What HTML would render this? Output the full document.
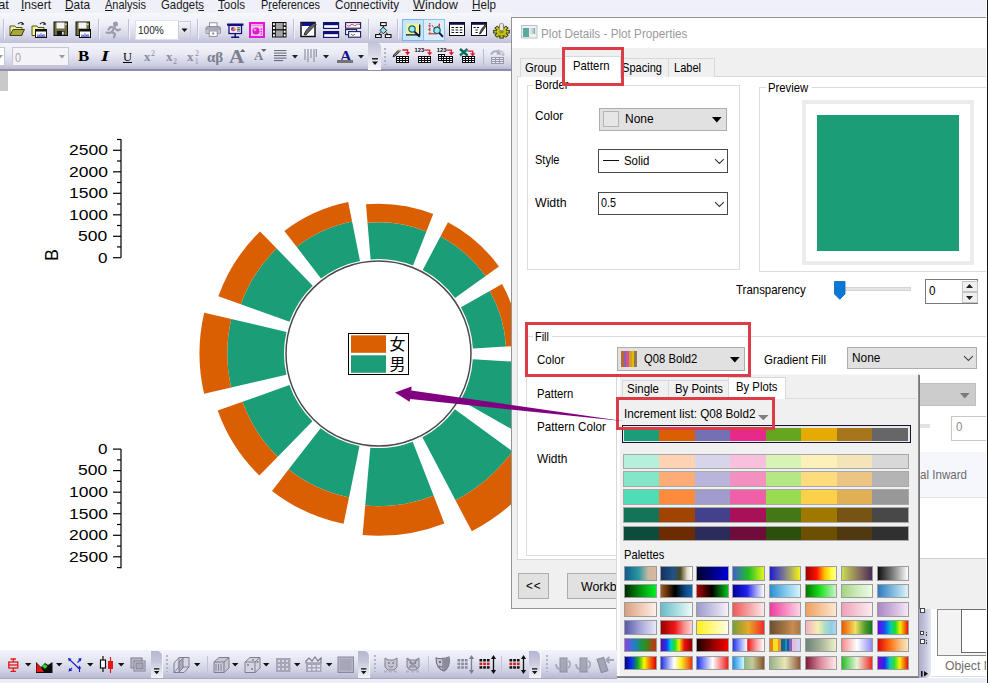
<!DOCTYPE html>
<html><head><meta charset="utf-8"><title>Plot Details - Plot Properties</title>
<style>
html,body{margin:0;padding:0;}
body{width:988px;height:683px;position:relative;overflow:hidden;background:#fff;font-family:"Liberation Sans",sans-serif;}
.a{position:absolute;box-sizing:border-box;}
.t{position:absolute;white-space:nowrap;line-height:1;display:inline-block;transform-origin:0 0;}
u{text-decoration:underline;text-underline-offset:1px;}
</style></head><body>
<div class="a" style="left:0px;top:0px;width:988px;height:14px;background:#eff0f8;"></div>
<div class="a" style="left:0px;top:13px;width:520px;height:30px;background:linear-gradient(#f7f8fc 0%,#eeeff7 35%,#d6d7e8 75%,#bfc0d8 100%);"></div>
<div class="a" style="left:0px;top:43px;width:520px;height:27px;background:linear-gradient(#f4f5fa 0%,#e9eaf4 40%,#cfd0e3 80%,#b4b5cf 100%);"></div>
<div class="a" style="left:0px;top:69px;width:520px;height:1.5px;background:#8f90a8;"></div>
<div class="a" style="left:511px;top:0px;width:477px;height:18px;background:linear-gradient(#eff0f8 0%,#eff0f8 70%,#f5f6fb 100%);"></div>
<div class="a" style="left:0px;top:71px;width:8px;height:20px;background:#c9c9c9;"></div>
<span class="t" style="left:-1.7px;top:-0.8px;font-size:12.6px;color:#1a1a1a;font-family:'Liberation Sans',sans-serif;transform:scaleX(1.047);">at</span>
<span class="t" style="left:21.3px;top:-0.8px;font-size:12.6px;color:#1a1a1a;font-family:'Liberation Sans',sans-serif;transform:scaleX(0.952);"><u>I</u>nsert</span>
<span class="t" style="left:65.3px;top:-0.8px;font-size:12.6px;color:#1a1a1a;font-family:'Liberation Sans',sans-serif;transform:scaleX(0.939);"><u>D</u>ata</span>
<span class="t" style="left:105.3px;top:-0.8px;font-size:12.6px;color:#1a1a1a;font-family:'Liberation Sans',sans-serif;transform:scaleX(0.874);"><u>A</u>nalysis</span>
<span class="t" style="left:161.3px;top:-0.8px;font-size:12.6px;color:#1a1a1a;font-family:'Liberation Sans',sans-serif;transform:scaleX(0.903);">Gadget<u>s</u></span>
<span class="t" style="left:218.3px;top:-0.8px;font-size:12.6px;color:#1a1a1a;font-family:'Liberation Sans',sans-serif;transform:scaleX(0.918);"><u>T</u>ools</span>
<span class="t" style="left:261.3px;top:-0.8px;font-size:12.6px;color:#1a1a1a;font-family:'Liberation Sans',sans-serif;transform:scaleX(0.868);">P<u>r</u>eferences</span>
<span class="t" style="left:335.3px;top:-0.8px;font-size:12.6px;color:#1a1a1a;font-family:'Liberation Sans',sans-serif;transform:scaleX(0.933);">Co<u>n</u>nectivity</span>
<span class="t" style="left:413.3px;top:-0.8px;font-size:12.6px;color:#1a1a1a;font-family:'Liberation Sans',sans-serif;transform:scaleX(1.004);"><u>W</u>indow</span>
<span class="t" style="left:472.3px;top:-0.8px;font-size:12.6px;color:#1a1a1a;font-family:'Liberation Sans',sans-serif;transform:scaleX(0.926);"><u>H</u>elp</span>
<div class="a" style="left:3px;top:19px;width:1px;height:20px;background:#bfc0d6;"></div>
<div class="a" style="left:4px;top:19px;width:1px;height:20px;background:#f4f4fa;"></div>
<div class="a" style="left:98px;top:19px;width:1px;height:20px;background:#bfc0d6;"></div>
<div class="a" style="left:99px;top:19px;width:1px;height:20px;background:#f4f4fa;"></div>
<div class="a" style="left:128px;top:19px;width:1px;height:20px;background:#bfc0d6;"></div>
<div class="a" style="left:129px;top:19px;width:1px;height:20px;background:#f4f4fa;"></div>
<div class="a" style="left:197px;top:19px;width:1px;height:20px;background:#bfc0d6;"></div>
<div class="a" style="left:198px;top:19px;width:1px;height:20px;background:#f4f4fa;"></div>
<div class="a" style="left:293px;top:19px;width:1px;height:20px;background:#bfc0d6;"></div>
<div class="a" style="left:294px;top:19px;width:1px;height:20px;background:#f4f4fa;"></div>
<div class="a" style="left:368px;top:19px;width:1px;height:20px;background:#bfc0d6;"></div>
<div class="a" style="left:369px;top:19px;width:1px;height:20px;background:#f4f4fa;"></div>
<div class="a" style="left:397px;top:19px;width:1px;height:20px;background:#bfc0d6;"></div>
<div class="a" style="left:398px;top:19px;width:1px;height:20px;background:#f4f4fa;"></div>
<svg class="a" style="left:9px;top:21px;" width="17" height="18" viewBox="0 0 17 18"><path d="M1 5h5l1 1.5h6v8H1z" fill="#f3f0a0" stroke="#55551a" stroke-width="1"/><path d="M1 14.5l3-6h11.5l-3 6z" fill="#a8a840" stroke="#44440f" stroke-width="1"/><path d="M9 3c2-2 4-2 5.5 0" fill="none" stroke="#222" stroke-width="1.2"/><path d="M13 1l2.2 2.6-3 .4z" fill="#222"/></svg>
<svg class="a" style="left:31px;top:21px;" width="17" height="18" viewBox="0 0 17 18"><path d="M1 5h5l1 1.5h6v8H1z" fill="#f3f0a0" stroke="#55551a" stroke-width="1"/><path d="M9 3c2-2 4-2 5.5 0" fill="none" stroke="#222" stroke-width="1.2"/><path d="M13 1l2.2 2.6-3 .4z" fill="#222"/><rect x="4.5" y="8.5" width="11" height="8" fill="#fff" stroke="#111"/><rect x="5" y="9" width="10" height="1.5" fill="#111"/><path d="M6 15.200h8.500" stroke="#22c" stroke-width=".9"/><path d="M7 14.800v-1.500M8.500 14.800v-1M10 14.800v-2.500M11.500 14.800v-1.200M13 14.800v-1.800" stroke="#22c" stroke-width=".8"/></svg>
<svg class="a" style="left:53px;top:21px;" width="17" height="18" viewBox="0 0 17 18"><rect x="1" y="1" width="13.5" height="13.5" fill="#6e6e3c" stroke="#111"/><rect x="3.5" y="1.5" width="8" height="6" fill="#f4f4f4"/><rect x="4" y="10" width="7.5" height="4.5" fill="#161616"/><rect x="9" y="10.7" width="1.8" height="3" fill="#ddd"/><rect x="12.2" y="2.5" width="1.3" height="1.6" fill="#eee"/></svg>
<svg class="a" style="left:75px;top:21px;" width="17" height="18" viewBox="0 0 17 18"><rect x="1" y="1" width="13.5" height="13.5" fill="#6e6e3c" stroke="#111"/><rect x="3.5" y="1.5" width="8" height="6" fill="#f4f4f4"/><rect x="4" y="10" width="7.5" height="4.5" fill="#161616"/><rect x="9" y="10.7" width="1.8" height="3" fill="#ddd"/><rect x="12.2" y="2.5" width="1.3" height="1.6" fill="#eee"/><rect x="4.5" y="8.5" width="11" height="8" fill="#fff" stroke="#111"/><rect x="5" y="9" width="10" height="1.5" fill="#111"/><path d="M6 15.200h8.500" stroke="#22c" stroke-width=".9"/><path d="M7 14.800v-1.500M8.500 14.800v-1M10 14.800v-2.500M11.500 14.800v-1.200M13 14.800v-1.800" stroke="#22c" stroke-width=".8"/></svg>
<svg class="a" style="left:104px;top:21px;" width="18" height="18" viewBox="0 0 18 18"><g fill="none" stroke="#9b9bab" stroke-width="2.2" stroke-linecap="round" stroke-linejoin="round"><circle cx="11.5" cy="3" r="1.4" fill="#9b9bab"/><path d="M10.5 6l-2.5 5 3 2-1 3.5"/><path d="M8 11l-3 1-2.5-.5"/><path d="M10 6.5l-3.5-.5-2 2.5"/><path d="M10.5 7l3 2.5 2.5-1"/></g></svg>
<div class="a" style="left:135px;top:20px;width:44px;height:20px;background:#fff;border:1px solid #dfe0ec;"></div>
<span class="t" style="left:137.9px;top:24.4px;font-size:11.6px;color:#222;font-family:'Liberation Sans',sans-serif;transform:scaleX(0.866);">100%</span>
<div class="a" style="left:178px;top:21px;width:13px;height:18px;border:1px solid #c9cadb;background:linear-gradient(#f4f4f9,#cfd0e0);"></div>
<svg class="a" style="left:181px;top:28px;" width="8" height="5" viewBox="0 0 8 5"><path d="M0.5 0.5h6L3.5 4z" fill="#111"/></svg>
<svg class="a" style="left:205px;top:22px;" width="17" height="15" viewBox="0 0 17 15"><rect x="4.5" y=".8" width="7.5" height="5" fill="#fff" stroke="#8a8a98" stroke-width=".9"/><path d="M1 6.2c0-1 .8-1.6 1.8-1.6h10.8c1 0 1.8.6 1.8 1.6v5H1z" fill="#a9a9b8" stroke="#7a7a8a" stroke-width=".8"/><rect x="1.2" y="8" width="14" height="3" fill="#c6c6d2"/><rect x="4.2" y="9" width="8" height="5.3" fill="#fff" stroke="#7a7a8a" stroke-width=".8"/><rect x="7.2" y="10.5" width="2" height="2" fill="#8a8a98"/></svg>
<svg class="a" style="left:227px;top:22.5px;" width="17" height="15" viewBox="0 0 17 15"><rect x="0" y=".5" width="16.5" height="2.2" fill="#10107c"/><rect x="2" y="2.5" width="12.5" height="8" fill="#fff" stroke="#10107c" stroke-width="1.3"/><circle cx="6.3" cy="6.3" r="2.3" fill="#e05090"/><path d="M6.3 6.3V4A2.3 2.3 0 0 1 8.6 6.3z" fill="#e8c020"/><path d="M6.3 6.3H4A2.3 2.3 0 0 1 6.3 4z" fill="#3050c0"/><path d="M9.8 4.8h3.4M9.8 6.4h3.4M9.8 8h3.4" stroke="#222" stroke-width=".8"/><path d="M8.2 11v3M4.2 14.2h8" stroke="#10107c" stroke-width="1.5"/></svg>
<svg class="a" style="left:249px;top:22px;" width="16" height="16" viewBox="0 0 16 16"><rect x="1" y="1" width="14" height="14" fill="#fbc4f4" stroke="#e418d0" stroke-width="2"/><path d="M2 3.2h12" stroke="#f070e0" stroke-width="1"/><circle cx="7" cy="9" r="3.6" fill="#e018c8"/><circle cx="6" cy="7.8" r="1.4" fill="#f890ec"/><rect x="11.6" y="6.5" width="1.3" height="1.3" fill="#c010b0"/><rect x="11.6" y="9" width="1.3" height="1.3" fill="#c010b0"/><rect x="11.6" y="11.3" width="1.3" height="1.3" fill="#c010b0"/></svg>
<svg class="a" style="left:272px;top:22px;" width="15" height="16" viewBox="0 0 15 16"><rect x="0" y="0" width="14.5" height="15.5" fill="#0c0c0c"/><rect x="3.8" y="1" width="7" height="6.2" fill="#a4a4a4"/><rect x="3.8" y="8.4" width="7" height="6.2" fill="#a4a4a4"/><g fill="#fff"><rect x="1" y="1.2" width="1.9" height="2.1"/><rect x="1" y="4.9" width="1.9" height="2.1"/><rect x="1" y="8.6" width="1.9" height="2.1"/><rect x="1" y="12.3" width="1.9" height="2.1"/><rect x="11.7" y="1.2" width="1.9" height="2.1"/><rect x="11.7" y="4.9" width="1.9" height="2.1"/><rect x="11.7" y="8.6" width="1.9" height="2.1"/><rect x="11.7" y="12.3" width="1.9" height="2.1"/></g></svg>
<svg class="a" style="left:300px;top:21px;" width="18" height="17" viewBox="0 0 18 17"><rect x="1" y="1.5" width="14" height="14" fill="#fff" stroke="#111" stroke-width="1.5"/><rect x="1.5" y="2" width="13" height="3" fill="#10109c"/><path d="M4 13.5c2-5 5-8 10.5-11.5l1.5 1.5c-4 4-7 7-10 10.5z" fill="#666" stroke="#111" stroke-width=".8"/></svg>
<svg class="a" style="left:323px;top:22px;" width="17" height="16" viewBox="0 0 17 16"><rect x=".6" y=".6" width="15" height="5.8" fill="#fff" stroke="#0c0c5c" stroke-width="1.1"/><rect x=".6" y=".6" width="15" height="2.6" fill="#10107c"/><rect x=".6" y="9.6" width="15" height="5.8" fill="#fff" stroke="#0c0c5c" stroke-width="1.1"/><rect x=".6" y="9.6" width="15" height="2.6" fill="#10107c"/></svg>
<svg class="a" style="left:345px;top:22px;" width="17" height="16" viewBox="0 0 17 16"><rect x=".6" y=".6" width="15" height="5.6" fill="#fff" stroke="#1c1c5c" stroke-width="1.1"/><path d="M1.5 2.8c1.5 1.6 3 1.6 4.5 0s3 1.6 4.5.6 2.5-1.6 4.5-1" fill="none" stroke="#d02030" stroke-width=".9"/><rect x=".6" y="7.6" width="11" height="5" fill="#fff" stroke="#1c1c5c" stroke-width="1.1"/><rect x="3.6" y="9.6" width="12" height="5.6" fill="#fff" stroke="#1c1c5c" stroke-width="1.1"/><path d="M6 12l2 1.6 2-1.6" fill="none" stroke="#444" stroke-width=".8"/></svg>
<svg class="a" style="left:375px;top:22px;" width="17" height="16" viewBox="0 0 17 16"><path d="M8.3 3.5v3M5.8 10.5L3.2 12.6M10.8 10.5l2.6 2.1" stroke="#111" stroke-width="1"/><rect x="5.6" y=".6" width="5.6" height="3" fill="#fff" stroke="#111" stroke-width="1.1"/><rect x=".6" y="12.6" width="5.6" height="3" fill="#fff" stroke="#111" stroke-width="1.1"/><rect x="10.4" y="12.6" width="5.6" height="3" fill="#fff" stroke="#111" stroke-width="1.1"/><path d="M8.3 5l3.4 3.4-3.4 3.4-3.4-3.4z" fill="#8ee0e6" stroke="#111" stroke-width=".9"/></svg>
<div class="a" style="left:402px;top:19px;width:21.6px;height:21.5px;background:#c4e5fa;border:1px solid #78b4e6;"></div>
<div class="a" style="left:423.4px;top:19px;width:22px;height:21.5px;background:#d9edfb;border:1px solid #8cc0ea;"></div>
<svg class="a" style="left:405px;top:22px;" width="18" height="17" viewBox="0 0 18 17"><rect x="1.5" y="1.8" width="13" height="10.4" fill="#f4f490"/><path d="M1 12.8h14.2M14.7 2.5v10.8" stroke="#111" stroke-width="1.3"/><circle cx="7" cy="7" r="3.2" fill="#98e8ec" stroke="#146070" stroke-width="1.2"/><path d="M9.4 9.6l5.4 5.2" stroke="#101040" stroke-width="2"/></svg>
<svg class="a" style="left:426px;top:22px;" width="18" height="17" viewBox="0 0 18 17"><path d="M3.8 1v11" stroke="#d02020" stroke-width="1.1" stroke-dasharray="1.4 .9"/><path d="M2.5 11.8h9" stroke="#d02020" stroke-width="1.1"/><path d="M2.3 3.8h2M2.3 7.5h2" stroke="#d02020" stroke-width=".9"/><path d="M6 3c1.5 3.5 5 4 7.5-1" fill="none" stroke="#d02020" stroke-width=".9"/><path d="M13.4 1.5v4" stroke="#d02020" stroke-width=".9"/><circle cx="11" cy="8.3" r="3.2" fill="#98e8ec" stroke="#146070" stroke-width="1.2"/><path d="M13.3 10.8l3.6 4" stroke="#101040" stroke-width="2"/></svg>
<svg class="a" style="left:449px;top:22px;" width="17" height="15" viewBox="0 0 17 15"><rect x=".5" y=".5" width="15" height="13" fill="#fff" stroke="#0c0c0c" stroke-width="1"/><rect x=".5" y=".5" width="15" height="2.3" fill="#10104c"/><path d="M2.500 5.500h11M2.500 8h11M2.500 10.500h11" stroke="#111" stroke-width="1.100" stroke-dasharray="2.600 1.500"/></svg>
<svg class="a" style="left:471px;top:22px;" width="17" height="15" viewBox="0 0 17 15"><rect x=".5" y=".5" width="15" height="13" fill="#fff" stroke="#0c0c0c" stroke-width="1"/><rect x=".5" y=".5" width="15" height="2.300" fill="#10104c"/><path d="M2.500 5.500h6M4.500 8h3M4.500 10.500h2.500" stroke="#111" stroke-width="1.100" stroke-dasharray="2.200 1.200"/><path d="M8.500 12c.8-3.500 3-6.500 6-9.500l1 1c-2.500 3-4 5.500-6 8.200z" fill="#555" stroke="#111" stroke-width=".8"/></svg>
<svg class="a" style="left:492.5px;top:23px;" width="17" height="15.5" viewBox="0 0 17 15.5"><g transform="translate(8.500,8.700) scale(1,.82)"><g fill="#c4c414" stroke="#2c2c08" stroke-width="1"><circle r="5.400"/><rect x="-1.700" y="-7.800" width="3.400" height="3.400"/><rect x="-1.700" y="4.400" width="3.400" height="3.400"/><rect x="-7.800" y="-1.700" width="3.400" height="3.400"/><rect x="4.400" y="-1.700" width="3.400" height="3.400"/><rect x="-1.700" y="-7.800" width="3.400" height="3.400" transform="rotate(45)"/><rect x="-1.700" y="4.400" width="3.400" height="3.400" transform="rotate(45)"/><rect x="-7.800" y="-1.700" width="3.400" height="3.400" transform="rotate(45)"/><rect x="4.400" y="-1.700" width="3.400" height="3.400" transform="rotate(45)"/></g><circle r="5" fill="#c4c414"/><circle r="2.200" fill="#8c8c10"/></g><rect x="6.600" y=".6" width="3.800" height="7" rx="1" fill="#e8e8e8" stroke="#777" stroke-width=".7"/></svg>
<div class="a" style="left:0px;top:47px;width:5px;height:19px;background:#fff;border:1px solid #c4c5d6;border-left:none;"></div>
<svg class="a" style="left:-3px;top:55px;" width="7" height="4" viewBox="0 0 7 4"><path d="M0 0h6L3 3.5z" fill="#999"/></svg>
<div class="a" style="left:12px;top:47px;width:57px;height:19px;background:#f4f4f8;border:1px solid #c4c5d6;"></div>
<span class="t" style="left:15.3px;top:51.5px;font-size:12.5px;color:#a5a5a5;font-family:'Liberation Sans',sans-serif;transform:scaleX(0.863);">0</span>
<svg class="a" style="left:59px;top:55px;" width="7" height="4" viewBox="0 0 7 4"><path d="M0 0h6L3 3.5z" fill="#999"/></svg>
<span class="t" style="left:78.4px;top:48.8px;font-size:14.6px;color:#000;font-family:'Liberation Serif',serif;font-weight:bold;transform:scaleX(1.150);">B</span>
<span class="t" style="left:100.5px;top:48.8px;font-size:14.6px;color:#000;font-family:'Liberation Serif',serif;font-weight:bold;font-style:italic;transform:scaleX(1.408);">I</span>
<span class="t" style="left:123.0px;top:49.8px;font-size:13.2px;color:#000;font-family:'Liberation Serif',serif;transform:scaleX(0.944);"><u>U</u></span>
<span class="t" style="left:144.0px;top:50.7px;font-size:12.5px;color:#8b8ba0;font-family:'Liberation Serif',serif;font-weight:bold;transform:scaleX(1.040);">x</span>
<span class="t" style="left:151.0px;top:49.7px;font-size:7.5px;color:#8b8ba0;font-family:'Liberation Serif',serif;transform:scaleX(1.067);">2</span>
<span class="t" style="left:165.8px;top:50.7px;font-size:12.5px;color:#8b8ba0;font-family:'Liberation Serif',serif;font-weight:bold;transform:scaleX(1.040);">x</span>
<span class="t" style="left:173.0px;top:57.9px;font-size:7.5px;color:#8b8ba0;font-family:'Liberation Serif',serif;transform:scaleX(1.067);">2</span>
<span class="t" style="left:187.4px;top:50.7px;font-size:12.5px;color:#8b8ba0;font-family:'Liberation Serif',serif;font-weight:bold;transform:scaleX(1.040);">x</span>
<span class="t" style="left:194.5px;top:49.7px;font-size:7.5px;color:#8b8ba0;font-family:'Liberation Serif',serif;transform:scaleX(1.067);">2</span>
<span class="t" style="left:194.5px;top:57.9px;font-size:7.5px;color:#8b8ba0;font-family:'Liberation Serif',serif;transform:scaleX(0.933);">1</span>
<span class="t" style="left:206.8px;top:49.7px;font-size:14.5px;color:#7e7e90;font-family:'Liberation Serif',serif;font-weight:bold;transform:scaleX(1.030);">αβ</span>
<span class="t" style="left:229.3px;top:47.4px;font-size:19px;color:#7e7e90;font-family:'Liberation Serif',serif;font-weight:bold;transform:scaleX(1.108);">A</span>
<svg class="a" style="left:240px;top:49px;" width="5.5" height="3.2" viewBox="0 0 5.5 3.2"><path d="M2.7 0L5.4 3H0z" fill="#666"/></svg>
<span class="t" style="left:254.3px;top:51.3px;font-size:11.5px;color:#7e7e90;font-family:'Liberation Serif',serif;font-weight:bold;transform:scaleX(1.120);">A</span>
<svg class="a" style="left:260.6px;top:49px;" width="5.8" height="3.2" viewBox="0 0 5.8 3.2"><path d="M0 0h5.6L2.8 3z" fill="#666"/></svg>
<svg class="a" style="left:273.5px;top:50px;" width="14" height="12" viewBox="0 0 14 12"><path d="M0 .6h12.5M0 3.1h12.5M0 5.6h12.5M0 8.1h12.5M0 10.6h9" stroke="#606070" stroke-width="1"/></svg>
<svg class="a" style="left:291.5px;top:55px;" width="7" height="4" viewBox="0 0 7 4"><path d="M0 0h6L3 3.5z" fill="#222"/></svg>
<svg class="a" style="left:304px;top:49px;" width="13" height="14" viewBox="0 0 13 14"><path d="M1 0v11M4 0v13M7 0v9M10 0v13M12.3 0v8" stroke="#8b8ba0" stroke-width="1.1"/></svg>
<svg class="a" style="left:322.5px;top:55px;" width="7" height="4" viewBox="0 0 7 4"><path d="M0 0h6L3 3.5z" fill="#222"/></svg>
<span class="t" style="left:339.5px;top:47.6px;font-size:15.2px;color:#14148c;font-family:'Liberation Serif',serif;font-weight:bold;transform:scaleX(1.048);">A</span>
<div class="a" style="left:337px;top:60px;width:16px;height:3.4px;background:#747474;"></div>
<svg class="a" style="left:358px;top:55px;" width="7" height="4" viewBox="0 0 7 4"><path d="M0 0h6L3 3.5z" fill="#222"/></svg>
<div class="a" style="left:368px;top:43px;width:13px;height:27px;background:linear-gradient(#c4c5da 0%,#d6d7e6 40%,#f0f0f7 85%,#f6f6fb 100%);border-radius:0 4px 0 0;"></div>
<svg class="a" style="left:371.5px;top:58px;" width="7" height="8" viewBox="0 0 7 8"><path d="M0 .8h6" stroke="#111" stroke-width="1.4"/><path d="M0 3.5h6L3 7z" fill="#111"/></svg>
<div class="a" style="left:384px;top:48px;width:2px;height:17px;background:repeating-linear-gradient(#b2b3cc 0 2px,transparent 2px 4px);"></div>
<svg class="a" style="left:388px;top:44px" width="124" height="26" viewBox="388 44 124 26"><path d="M393 56.8l1-2.2 5-5 1.3 1.3-5 5z" fill="#8a8a8a" stroke="#111" stroke-width=".9"/><path d="M397.5 49.5l2.5-1.5 1 1-1.5 2.5z" fill="#f0f0a0" opacity=".8"/><path d="M402.4 50h5.2v2.5" fill="none" stroke="#d8182c" stroke-width="1.3"/><path d="M405.0 52h5.2l-2.6 3.3z" fill="#d8182c"/><rect x="396" y="56" width="13" height="7" fill="#0c0c0c"/><rect x="397" y="57" width="2" height="1" fill="#fff"/><rect x="400" y="57" width="2" height="1" fill="#fff"/><rect x="403" y="57" width="2" height="1" fill="#fff"/><rect x="406" y="57" width="2" height="1" fill="#fff"/><rect x="397" y="59" width="2" height="1" fill="#fff"/><rect x="400" y="59" width="2" height="1" fill="#fff"/><rect x="403" y="59" width="2" height="1" fill="#fff"/><rect x="406" y="59" width="2" height="1" fill="#fff"/><rect x="397" y="61" width="2" height="1" fill="#fff"/><rect x="400" y="61" width="2" height="1" fill="#fff"/><rect x="403" y="61" width="2" height="1" fill="#fff"/><rect x="406" y="61" width="2" height="1" fill="#fff"/><text x="414.6" y="52.4" font-family="Liberation Sans,sans-serif" font-size="6.2" font-weight="bold" fill="#0c0c0c" textLength="9.6" lengthAdjust="spacingAndGlyphs">123</text><path d="M424.4 50.2h5.2v2.5" fill="none" stroke="#d8182c" stroke-width="1.3"/><path d="M427.0 52.2h5.2l-2.6 3.3z" fill="#d8182c"/><rect x="418" y="56" width="13" height="7" fill="#0c0c0c"/><rect x="419" y="57" width="2" height="1" fill="#fff"/><rect x="422" y="57" width="2" height="1" fill="#fff"/><rect x="425" y="57" width="2" height="1" fill="#fff"/><rect x="428" y="57" width="2" height="1" fill="#fff"/><rect x="419" y="59" width="2" height="1" fill="#fff"/><rect x="422" y="59" width="2" height="1" fill="#fff"/><rect x="425" y="59" width="2" height="1" fill="#fff"/><rect x="428" y="59" width="2" height="1" fill="#fff"/><rect x="419" y="61" width="2" height="1" fill="#fff"/><rect x="422" y="61" width="2" height="1" fill="#fff"/><rect x="425" y="61" width="2" height="1" fill="#fff"/><rect x="428" y="61" width="2" height="1" fill="#fff"/><text x="436.8" y="52.4" font-family="Liberation Sans,sans-serif" font-size="6.2" font-weight="bold" fill="#0c0c0c" textLength="9.6" lengthAdjust="spacingAndGlyphs">123</text><path d="M446.2 50.2h5.2v2.5" fill="none" stroke="#d8182c" stroke-width="1.3"/><path d="M448.8 52.2h5.2l-2.6 3.3z" fill="#d8182c"/><rect x="438" y="54" width="7" height="7" fill="#0c0c0c"/><rect x="439" y="55" width="2" height="1" fill="#fff"/><rect x="442" y="55" width="2" height="1" fill="#fff"/><rect x="439" y="57" width="2" height="1" fill="#fff"/><rect x="442" y="57" width="2" height="1" fill="#fff"/><rect x="439" y="59" width="2" height="1" fill="#fff"/><rect x="442" y="59" width="2" height="1" fill="#fff"/><rect x="443" y="56" width="10" height="7" fill="#0c0c0c"/><rect x="444" y="57" width="2" height="1" fill="#fff"/><rect x="447" y="57" width="2" height="1" fill="#fff"/><rect x="450" y="57" width="2" height="1" fill="#fff"/><rect x="444" y="59" width="2" height="1" fill="#fff"/><rect x="447" y="59" width="2" height="1" fill="#fff"/><rect x="450" y="59" width="2" height="1" fill="#fff"/><rect x="444" y="61" width="2" height="1" fill="#fff"/><rect x="447" y="61" width="2" height="1" fill="#fff"/><rect x="450" y="61" width="2" height="1" fill="#fff"/><path d="M460 49l7.5 6.5M467.5 49l-7.5 6.5" stroke="#147a6c" stroke-width="2.6"/><path d="M460 49l7.5 6.5" stroke="#0c4c44" stroke-width="1"/><path d="M467.5 51.2h5.2v2.5" fill="none" stroke="#d8182c" stroke-width="1.3"/><path d="M470.1 53.2h5.2l-2.6 3.3z" fill="#d8182c"/><rect x="462" y="56" width="13" height="7" fill="#0c0c0c"/><rect x="463" y="57" width="2" height="1" fill="#fff"/><rect x="466" y="57" width="2" height="1" fill="#fff"/><rect x="469" y="57" width="2" height="1" fill="#fff"/><rect x="472" y="57" width="2" height="1" fill="#fff"/><rect x="463" y="59" width="2" height="1" fill="#fff"/><rect x="466" y="59" width="2" height="1" fill="#fff"/><rect x="469" y="59" width="2" height="1" fill="#fff"/><rect x="472" y="59" width="2" height="1" fill="#fff"/><rect x="463" y="61" width="2" height="1" fill="#fff"/><rect x="466" y="61" width="2" height="1" fill="#fff"/><rect x="469" y="61" width="2" height="1" fill="#fff"/><rect x="472" y="61" width="2" height="1" fill="#fff"/></svg>
<div class="a" style="left:482.5px;top:49px;width:1px;height:16px;background:#b9bad0;"></div>
<svg class="a" style="left:489px;top:48px;" width="18" height="17" viewBox="0 0 18 17"><g opacity=".8"><path d="M2 6.5c2-4 6-4 8.5-1" fill="none" stroke="#9a9aae" stroke-width="1.8"/><path d="M9.5 2l2.8 4.6-4.8.2z" fill="#9a9aae"/><path d="M6 3.5c2-2 5-2 7 1" fill="none" stroke="#b0b0c0" stroke-width="1.4"/><path d="M14 3v4M12.5 6l1.5 2 1.5-2z" stroke="#b0b0c0" fill="#b0b0c0" stroke-width=".8"/></g><rect x="2" y="9" width="13" height="7" fill="#9a9aae"/><rect x="3" y="10" width="3" height="1" fill="#e6e6f0"/><rect x="7" y="10" width="3" height="1" fill="#e6e6f0"/><rect x="11" y="10" width="3" height="1" fill="#e6e6f0"/><rect x="3" y="12" width="3" height="1" fill="#e6e6f0"/><rect x="7" y="12" width="3" height="1" fill="#e6e6f0"/><rect x="11" y="12" width="3" height="1" fill="#e6e6f0"/><rect x="3" y="14" width="3" height="1" fill="#e6e6f0"/><rect x="7" y="14" width="3" height="1" fill="#e6e6f0"/><rect x="11" y="14" width="3" height="1" fill="#e6e6f0"/></svg>
<svg class="a" style="left:0;top:0" width="988" height="683" viewBox="0 0 988 683"><path d="M370.6 259.4L367.5 222.8A131.2 131.2 0 0 1 426.4 231.4L413.0 265.6A94.5 94.5 0 0 0 370.6 259.4Z" fill="#1b9e77"/><path d="M367.5 222.8L366.0 204.3A149.8 149.8 0 0 1 433.2 214.1L426.4 231.4A131.2 131.2 0 0 0 367.5 222.8Z" fill="#d95f02"/><path d="M422.7 270.0L440.4 236.6A132.3 132.3 0 0 1 485.7 276.0L455.0 298.1A94.5 94.5 0 0 0 422.7 270.0Z" fill="#1b9e77"/><path d="M440.4 236.6L448.0 222.2A148.6 148.6 0 0 1 498.9 266.4L485.7 276.0A132.3 132.3 0 0 0 440.4 236.6Z" fill="#d95f02"/><path d="M460.9 307.2L489.8 291.0A127.7 127.7 0 0 1 506.0 346.5L472.9 348.4A94.5 94.5 0 0 0 460.9 307.2Z" fill="#1b9e77"/><path d="M489.8 291.0L502.0 284.1A141.7 141.7 0 0 1 520.0 345.8L506.0 346.5A127.7 127.7 0 0 0 489.8 291.0Z" fill="#d95f02"/><path d="M472.8 359.2L540.2 363.2A162.0 162.0 0 0 1 519.4 433.6L460.7 400.2A94.5 94.5 0 0 0 472.8 359.2Z" fill="#1b9e77"/><path d="M540.2 363.2L568.2 364.8A190.0 190.0 0 0 1 543.7 447.4L519.4 433.6A162.0 162.0 0 0 0 540.2 363.2Z" fill="#d95f02"/><path d="M454.9 409.2L512.4 451.2A165.7 165.7 0 0 1 455.5 500.3L422.4 437.2A94.5 94.5 0 0 0 454.9 409.2Z" fill="#1b9e77"/><path d="M512.4 451.2L540.7 471.9A200.8 200.8 0 0 1 471.8 531.3L455.5 500.3A165.7 165.7 0 0 0 512.4 451.2Z" fill="#d95f02"/><path d="M412.7 441.7L433.7 495.8A152.6 152.6 0 0 1 365.2 505.6L370.3 447.7A94.5 94.5 0 0 0 412.7 441.7Z" fill="#1b9e77"/><path d="M433.7 495.8L444.4 523.4A182.2 182.2 0 0 1 362.6 535.1L365.2 505.6A152.6 152.6 0 0 0 433.7 495.8Z" fill="#d95f02"/><path d="M359.5 446.1L349.0 497.4A146.8 146.8 0 0 1 288.5 469.5L320.6 428.2A94.5 94.5 0 0 0 359.5 446.1Z" fill="#1b9e77"/><path d="M349.0 497.4L343.6 523.8A173.8 173.8 0 0 1 272.0 490.9L288.5 469.5A146.8 146.8 0 0 0 349.0 497.4Z" fill="#d95f02"/><path d="M312.5 421.2L277.8 456.8A144.2 144.2 0 0 1 242.6 401.7L289.4 385.1A94.5 94.5 0 0 0 312.5 421.2Z" fill="#1b9e77"/><path d="M277.8 456.8L259.4 475.6A170.6 170.6 0 0 1 217.7 410.5L242.6 401.7A144.2 144.2 0 0 0 277.8 456.8Z" fill="#d95f02"/><path d="M286.4 374.8L231.2 387.6A151.2 151.2 0 0 1 231.3 319.0L286.5 332.0A94.5 94.5 0 0 0 286.4 374.8Z" fill="#1b9e77"/><path d="M231.2 387.6L204.1 393.8A179.0 179.0 0 0 1 204.2 312.7L231.3 319.0A151.2 151.2 0 0 0 231.2 387.6Z" fill="#d95f02"/><path d="M289.5 321.7L240.8 304.2A146.3 146.3 0 0 1 276.7 248.5L312.7 285.7A94.5 94.5 0 0 0 289.5 321.7Z" fill="#1b9e77"/><path d="M240.8 304.2L218.4 296.2A170.1 170.1 0 0 1 260.1 231.4L276.7 248.5A146.3 146.3 0 0 0 240.8 304.2Z" fill="#d95f02"/><path d="M321.0 278.6L296.6 246.8A134.6 134.6 0 0 1 352.1 221.6L360.0 260.9A94.5 94.5 0 0 0 321.0 278.6Z" fill="#1b9e77"/><path d="M296.6 246.8L284.4 231.0A154.5 154.5 0 0 1 348.2 202.0L352.1 221.6A134.6 134.6 0 0 0 296.6 246.8Z" fill="#d95f02"/><circle cx="378.5" cy="353.55" r="92.5" fill="none" stroke="#4a4a4a" stroke-width="1.5"/><path d="M121 257.7V139.2" stroke="#000" stroke-width="1.2" fill="none"/><path d="M113 257.7H121" stroke="#000" stroke-width="1.2"/><path d="M117 246.9H121" stroke="#000" stroke-width="1.2"/><path d="M113 236.3H121" stroke="#000" stroke-width="1.2"/><path d="M117 225.5H121" stroke="#000" stroke-width="1.2"/><path d="M113 214.8H121" stroke="#000" stroke-width="1.2"/><path d="M117 204.0H121" stroke="#000" stroke-width="1.2"/><path d="M113 193.3H121" stroke="#000" stroke-width="1.2"/><path d="M117 182.5H121" stroke="#000" stroke-width="1.2"/><path d="M113 171.8H121" stroke="#000" stroke-width="1.2"/><path d="M117 161.0H121" stroke="#000" stroke-width="1.2"/><path d="M113 150.3H121" stroke="#000" stroke-width="1.2"/><path d="M117 139.5H121" stroke="#000" stroke-width="1.2"/><path d="M121 449.1V568.2" stroke="#000" stroke-width="1.2" fill="none"/><path d="M113 449.1H121" stroke="#000" stroke-width="1.2"/><path d="M117 459.9H121" stroke="#000" stroke-width="1.2"/><path d="M113 470.6H121" stroke="#000" stroke-width="1.2"/><path d="M117 481.4H121" stroke="#000" stroke-width="1.2"/><path d="M113 492.2H121" stroke="#000" stroke-width="1.2"/><path d="M117 503.0H121" stroke="#000" stroke-width="1.2"/><path d="M113 513.7H121" stroke="#000" stroke-width="1.2"/><path d="M117 524.5H121" stroke="#000" stroke-width="1.2"/><path d="M113 535.3H121" stroke="#000" stroke-width="1.2"/><path d="M117 546.1H121" stroke="#000" stroke-width="1.2"/><path d="M113 556.8H121" stroke="#000" stroke-width="1.2"/><path d="M117 567.6H121" stroke="#000" stroke-width="1.2"/><rect x="348.5" y="333.5" width="60" height="41" fill="#fff" stroke="#000" stroke-width="1"/><rect x="351" y="335.3" width="35" height="17.5" fill="#d95f02"/><rect x="351" y="355.3" width="35" height="17.5" fill="#1b9e77"/></svg>
<span class="t" style="left:98.0px;top:249.5px;font-size:15.4px;color:#000;font-family:'Liberation Sans',sans-serif;transform:scaleX(1.109);">0</span>
<span class="t" style="left:78.3px;top:228.1px;font-size:15.4px;color:#000;font-family:'Liberation Sans',sans-serif;transform:scaleX(1.136);">500</span>
<span class="t" style="left:68.6px;top:206.6px;font-size:15.4px;color:#000;font-family:'Liberation Sans',sans-serif;transform:scaleX(1.135);">1000</span>
<span class="t" style="left:68.6px;top:185.1px;font-size:15.4px;color:#000;font-family:'Liberation Sans',sans-serif;transform:scaleX(1.135);">1500</span>
<span class="t" style="left:68.6px;top:163.6px;font-size:15.4px;color:#000;font-family:'Liberation Sans',sans-serif;transform:scaleX(1.135);">2000</span>
<span class="t" style="left:68.6px;top:142.1px;font-size:15.4px;color:#000;font-family:'Liberation Sans',sans-serif;transform:scaleX(1.135);">2500</span>
<span class="t" style="left:98.0px;top:440.9px;font-size:15.4px;color:#000;font-family:'Liberation Sans',sans-serif;transform:scaleX(1.109);">0</span>
<span class="t" style="left:78.3px;top:462.4px;font-size:15.4px;color:#000;font-family:'Liberation Sans',sans-serif;transform:scaleX(1.136);">500</span>
<span class="t" style="left:68.6px;top:484.0px;font-size:15.4px;color:#000;font-family:'Liberation Sans',sans-serif;transform:scaleX(1.135);">1000</span>
<span class="t" style="left:68.6px;top:505.5px;font-size:15.4px;color:#000;font-family:'Liberation Sans',sans-serif;transform:scaleX(1.135);">1500</span>
<span class="t" style="left:68.6px;top:527.1px;font-size:15.4px;color:#000;font-family:'Liberation Sans',sans-serif;transform:scaleX(1.135);">2000</span>
<span class="t" style="left:68.6px;top:548.6px;font-size:15.4px;color:#000;font-family:'Liberation Sans',sans-serif;transform:scaleX(1.135);">2500</span>
<span class="t" style="left:42.5px;top:260.5px;font-size:18px;color:#000;transform:rotate(-90deg);transform-origin:0 0;">B</span>
<span class="t" style="left:389.5px;top:335px;font-size:16px;color:#000;font-family:'Liberation Sans','Noto Sans CJK SC',sans-serif;font-weight:400;line-height:1.2">女</span>
<span class="t" style="left:389.5px;top:354.5px;font-size:16px;color:#000;font-family:'Liberation Sans','Noto Sans CJK SC',sans-serif;font-weight:400;line-height:1.2">男</span>
<div class="a" style="left:511px;top:17px;width:480px;height:592.4px;background:#f0f0f0;border:1px solid #939393;"></div>
<div class="a" style="left:512px;top:18px;width:478px;height:29.8px;background:#fff;"></div>
<svg class="a" style="left:520.5px;top:25px;" width="17" height="14" viewBox="0 0 17 14"><rect x=".5" y=".5" width="15.5" height="12.5" fill="#eef1f1" stroke="#b9c4c4"/><rect x="2" y="3" width="6" height="9" fill="#2f8f7f" opacity=".75"/><rect x="9.5" y="3" width="5" height="6" fill="#c9d6d6"/><rect x="12.5" y="3" width="1.5" height="6" fill="#8fb0b0"/></svg>
<span class="t" style="left:540.8px;top:26.5px;font-size:13.2px;color:#9a9a9a;font-family:'Liberation Sans',sans-serif;transform:scaleX(0.888);">Plot Details - Plot Properties</span>
<div class="a" style="left:517px;top:76px;width:480px;height:483.5px;background:#fff;border:1px solid #d9d9d9;"></div>
<div class="a" style="left:519.5px;top:57.6px;width:44.5px;height:19px;background:#f0f0f0;border:1px solid #d9d9d9;border-bottom:none;"></div>
<div class="a" style="left:620px;top:57.6px;width:49px;height:19px;background:#f0f0f0;border:1px solid #d9d9d9;border-bottom:none;"></div>
<div class="a" style="left:668px;top:57.6px;width:47px;height:19px;background:#f0f0f0;border:1px solid #d9d9d9;border-bottom:none;"></div>
<div class="a" style="left:563px;top:56px;width:58px;height:22px;background:#fff;border:1px solid #d9d9d9;border-bottom:none;"></div>
<span class="t" style="left:525.3px;top:62.3px;font-size:12.6px;color:#000;font-family:'Liberation Sans',sans-serif;transform:scaleX(0.899);">Group</span>
<span class="t" style="left:572.8px;top:60.3px;font-size:12.6px;color:#000;font-family:'Liberation Sans',sans-serif;transform:scaleX(0.898);">Pattern</span>
<span class="t" style="left:621.8px;top:62.3px;font-size:12.6px;color:#000;font-family:'Liberation Sans',sans-serif;transform:scaleX(0.878);">Spacing</span>
<span class="t" style="left:674.3px;top:62.3px;font-size:12.6px;color:#000;font-family:'Liberation Sans',sans-serif;transform:scaleX(0.876);">Label</span>
<div class="a" style="left:527px;top:85px;width:212.5px;height:185px;border:1px solid #dcdcdc;"></div>
<div class="a" style="left:532.5px;top:83px;width:39.5px;height:5px;background:#fff;"></div>
<span class="t" style="left:534.8px;top:79.4px;font-size:12.6px;color:#000;font-family:'Liberation Sans',sans-serif;transform:scaleX(0.886);">Border</span>
<span class="t" style="left:534.8px;top:110.3px;font-size:12.6px;color:#000;font-family:'Liberation Sans',sans-serif;transform:scaleX(0.937);">Color</span>
<span class="t" style="left:534.8px;top:154.4px;font-size:12.6px;color:#000;font-family:'Liberation Sans',sans-serif;transform:scaleX(0.875);">Style</span>
<span class="t" style="left:534.8px;top:197.1px;font-size:12.6px;color:#000;font-family:'Liberation Sans',sans-serif;transform:scaleX(0.978);">Width</span>
<div class="a" style="left:599px;top:107.5px;width:128px;height:23px;background:#e1e1e1;border:1px solid #adadad;"></div>
<div class="a" style="left:603px;top:111px;width:15.5px;height:16px;background:#e6e6e6;border:1px solid #b4b4b4;"></div>
<span class="t" style="left:625.3px;top:113.2px;font-size:12.6px;color:#000;font-family:'Liberation Sans',sans-serif;transform:scaleX(0.953);">None</span>
<svg class="a" style="left:711.5px;top:117.3px;" width="10" height="6" viewBox="0 0 10 6"><path d="M0 0h9.6L4.8 5.4z" fill="#000"/></svg>
<div class="a" style="left:598px;top:149px;width:130px;height:23.5px;background:#fff;border:1px solid #4a4a4a;"></div>
<div class="a" style="left:602.5px;top:160.3px;width:16px;height:1.2px;background:#111;"></div>
<span class="t" style="left:624.3px;top:155.3px;font-size:12.6px;color:#000;font-family:'Liberation Sans',sans-serif;transform:scaleX(0.907);">Solid</span>
<svg class="a" style="left:713.5px;top:157.5px;" width="11" height="7" viewBox="0 0 11 7"><path d="M1 1.2l4.4 4.3 4.4-4.3" fill="none" stroke="#333" stroke-width="1.1"/></svg>
<div class="a" style="left:598px;top:192px;width:130px;height:23px;background:#fff;border:1px solid #4a4a4a;"></div>
<span class="t" style="left:601.3px;top:197.0px;font-size:12.6px;color:#000;font-family:'Liberation Sans',sans-serif;transform:scaleX(0.856);">0.5</span>
<svg class="a" style="left:713.5px;top:200.5px;" width="11" height="7" viewBox="0 0 11 7"><path d="M1 1.2l4.4 4.3 4.4-4.3" fill="none" stroke="#333" stroke-width="1.1"/></svg>
<div class="a" style="left:759px;top:87px;width:240px;height:184.5px;border:1px solid #dcdcdc;"></div>
<div class="a" style="left:765.5px;top:85px;width:46.299999999999955px;height:5px;background:#fff;"></div>
<span class="t" style="left:767.8px;top:81.6px;font-size:12.6px;color:#000;font-family:'Liberation Sans',sans-serif;transform:scaleX(0.899);">Preview</span>
<div class="a" style="left:801.5px;top:100px;width:172px;height:165px;background:#fff;border:4px solid #ececec;"></div>
<div class="a" style="left:817px;top:115px;width:142px;height:136px;background:#1b9e77;"></div>
<span class="t" style="left:735.6px;top:284.0px;font-size:12.6px;color:#000;font-family:'Liberation Sans',sans-serif;transform:scaleX(0.910);">Transparency</span>
<div class="a" style="left:837px;top:286.5px;width:74px;height:4.5px;background:#e4e4e4;border:1px solid #d4d4d4;"></div>
<svg class="a" style="left:834px;top:281px;" width="12" height="19" viewBox="0 0 12 19"><path d="M.5 .5h10.5v12.5L5.75 18.3.5 13z" fill="#0a78d6" stroke="#0565b8" stroke-width=".8"/></svg>
<div class="a" style="left:924.8px;top:278.8px;width:53.7px;height:25.4px;background:#fff;border:1px solid #7a7a7a;"></div>
<span class="t" style="left:929.3px;top:284.5px;font-size:12.6px;color:#000;font-family:'Liberation Sans',sans-serif;transform:scaleX(0.928);">0</span>
<div class="a" style="left:961.5px;top:280.5px;width:16px;height:11px;background:#f0f0f0;border:1px solid #c4c4c4;"></div>
<div class="a" style="left:961.5px;top:292px;width:16px;height:10.5px;background:#f0f0f0;border:1px solid #c4c4c4;"></div>
<svg class="a" style="left:966px;top:284px;" width="7" height="4.5" viewBox="0 0 7 4.5"><path d="M3.5 0L7 4H0z" fill="#222"/></svg>
<svg class="a" style="left:966px;top:295.5px;" width="7" height="4.5" viewBox="0 0 7 4.5"><path d="M0 0h7L3.5 4z" fill="#222"/></svg>
<div class="a" style="left:526px;top:336px;width:480px;height:220px;border:1px solid #dcdcdc;"></div>
<div class="a" style="left:533px;top:334px;width:19px;height:5px;background:#fff;"></div>
<span class="t" style="left:534.9px;top:330.8px;font-size:12.6px;color:#000;font-family:'Liberation Sans',sans-serif;transform:scaleX(0.864);">Fill</span>
<span class="t" style="left:537.0px;top:354.0px;font-size:12.6px;color:#000;font-family:'Liberation Sans',sans-serif;transform:scaleX(0.917);">Color</span>
<span class="t" style="left:537.0px;top:388.2px;font-size:12.6px;color:#000;font-family:'Liberation Sans',sans-serif;transform:scaleX(0.894);">Pattern</span>
<span class="t" style="left:537.0px;top:421.4px;font-size:12.6px;color:#000;font-family:'Liberation Sans',sans-serif;transform:scaleX(0.929);">Pattern Color</span>
<span class="t" style="left:537.0px;top:453.2px;font-size:12.6px;color:#000;font-family:'Liberation Sans',sans-serif;transform:scaleX(0.941);">Width</span>
<div class="a" style="left:617px;top:347.3px;width:127.5px;height:23.3px;background:#e1e1e1;border:1px solid #adadad;"></div>
<div class="a" style="left:621px;top:350.8px;width:16px;height:16px;background:#a0662a;background:linear-gradient(90deg,#b46a30 0 18%,#8a62b4 18% 34%,#d8508c 34% 50%,#d0a020 50% 68%,#e8b800 68% 82%,#8a7a58 82% 100%);"></div>
<span class="t" style="left:643.7px;top:352.7px;font-size:12.6px;color:#000;font-family:'Liberation Sans',sans-serif;transform:scaleX(0.893);">Q08 Bold2</span>
<svg class="a" style="left:729.5px;top:356.5px;" width="10" height="6" viewBox="0 0 10 6"><path d="M0 0h9.6L4.8 5.4z" fill="#000"/></svg>
<span class="t" style="left:763.9px;top:354.0px;font-size:12.6px;color:#000;font-family:'Liberation Sans',sans-serif;transform:scaleX(0.913);">Gradient Fill</span>
<div class="a" style="left:847px;top:347px;width:130px;height:22px;background:#e1e1e1;border:1px solid #adadad;"></div>
<span class="t" style="left:851.7px;top:351.6px;font-size:12.6px;color:#000;font-family:'Liberation Sans',sans-serif;transform:scaleX(0.943);">None</span>
<svg class="a" style="left:962.5px;top:354.5px;" width="11" height="7" viewBox="0 0 11 7"><path d="M1 1.2l4.4 4.3 4.4-4.3" fill="none" stroke="#444" stroke-width="1.1"/></svg>
<div class="a" style="left:919px;top:383.3px;width:57px;height:23.2px;background:#cccccc;border:1px solid #bfbfbf;"></div>
<svg class="a" style="left:960px;top:392.5px;" width="10" height="6" viewBox="0 0 10 6"><path d="M0 0h9.6L4.8 5.4z" fill="#7a7a7a"/></svg>
<div class="a" style="left:919px;top:424.4px;width:11px;height:3.2px;background:#e2e2e2;"></div>
<div class="a" style="left:951px;top:416px;width:40px;height:24.5px;background:#fff;border:1px solid #c8c8c8;"></div>
<span class="t" style="left:956.3px;top:421.0px;font-size:12.6px;color:#8a8a8a;font-family:'Liberation Sans',sans-serif;transform:scaleX(0.913);">0</span>
<div class="a" style="left:919px;top:452px;width:70px;height:45px;background:#f6f7fc;"></div>
<span class="t" style="left:920.3px;top:469.0px;font-size:12.6px;color:#6a6a6a;font-family:'Liberation Sans',sans-serif;transform:scaleX(0.919);">al Inward</span>
<div class="a" style="left:919px;top:497px;width:70px;height:1px;background:#e4e4e4;"></div>
<div class="a" style="left:919px;top:498px;width:70px;height:60px;background:#fff;"></div>
<div class="a" style="left:919px;top:557.5px;width:70px;height:51px;background:#f0f0f0;"></div>
<div class="a" style="left:919px;top:557.5px;width:70px;height:1px;background:#d0d0d0;"></div>
<div class="a" style="left:518px;top:573px;width:31px;height:25.6px;background:#e1e1e1;border:1px solid #adadad;"></div>
<span class="t" style="left:525.9px;top:580.3px;font-size:12.6px;color:#000;font-family:'Liberation Sans',sans-serif;transform:scaleX(0.938);letter-spacing:1px;">&lt;&lt;</span>
<div class="a" style="left:567px;top:573px;width:120px;height:25.6px;background:#e1e1e1;border:1px solid #adadad;"></div>
<span class="t" style="left:581.3px;top:580.5px;font-size:12.6px;color:#000;font-family:'Liberation Sans',sans-serif;transform:scaleX(0.982);">Workbook</span>
<div class="a" style="left:616px;top:374px;width:303px;height:302.5px;background:#f0f0f0;border:1px solid #8c8c8c;border-top:1px solid #f8f8f8;border-left:1px solid #d8d8d8;box-shadow:1px 1px 0 #777;"></div>
<div class="a" style="left:617px;top:375px;width:3px;height:300.5px;background:#fcfcfc;"></div>
<div class="a" style="left:620px;top:398px;width:297px;height:1px;background:#dcdcdc;"></div>
<div class="a" style="left:622px;top:379.5px;width:46.5px;height:19px;background:#f0f0f0;border:1px solid #d9d9d9;border-bottom:none;"></div>
<div class="a" style="left:668.5px;top:379.5px;width:60px;height:19px;background:#f0f0f0;border:1px solid #d9d9d9;border-bottom:none;border-left:none;"></div>
<div class="a" style="left:728px;top:376.5px;width:57.5px;height:22.5px;background:#fff;border:1px solid #d9d9d9;border-bottom:none;"></div>
<span class="t" style="left:626.6px;top:382.9px;font-size:12.6px;color:#000;font-family:'Liberation Sans',sans-serif;transform:scaleX(0.914);">Single</span>
<span class="t" style="left:674.7px;top:382.9px;font-size:12.6px;color:#000;font-family:'Liberation Sans',sans-serif;transform:scaleX(0.902);">By Points</span>
<span class="t" style="left:735.9px;top:380.9px;font-size:12.6px;color:#000;font-family:'Liberation Sans',sans-serif;transform:scaleX(0.898);">By Plots</span>
<span class="t" style="left:623.5px;top:408.0px;font-size:12.6px;color:#000;font-family:'Liberation Sans',sans-serif;transform:scaleX(0.930);">Increment list: Q08 Bold2</span>
<svg class="a" style="left:758px;top:414.8px;" width="11" height="6" viewBox="0 0 11 6"><path d="M0 0h10.6L5.3 5.2z" fill="#808080"/></svg>
<div class="a" style="left:622.4px;top:425.2px;width:288.4px;height:18px;background:#e8e8f0;border:1.2px solid #1a1428;"></div>
<div class="a" style="left:624.1px;top:427.7px;width:284.0px;height:13.2px;background:linear-gradient(90deg,#1b9e77 0.00% 12.50%,#d95f02 12.50% 25.00%,#7570b3 25.00% 37.50%,#e7298a 37.50% 50.00%,#66a61e 50.00% 62.50%,#e6ab02 62.50% 75.00%,#a6761d 75.00% 87.50%,#666666 87.50% 100.00%);outline:none;"></div>
<div class="a" style="left:624.1px;top:454.6px;width:284.0px;height:13.6px;background:linear-gradient(90deg,#b4f0dc 0.00% 12.50%,#ffd2b4 12.50% 25.00%,#d8d4ec 25.00% 37.50%,#f8c0dc 37.50% 50.00%,#d8f4b4 50.00% 62.50%,#fdf0b8 62.50% 75.00%,#f4e4b8 75.00% 87.50%,#d8d8d8 87.50% 100.00%);outline:1px solid #a8a8a8;"></div>
<div class="a" style="left:624.1px;top:472.4px;width:284.0px;height:13.6px;background:linear-gradient(90deg,#84e6c8 0.00% 12.50%,#fcac74 12.50% 25.00%,#b8b4dc 25.00% 37.50%,#f490c0 37.50% 50.00%,#b4e884 50.00% 62.50%,#fcdc7c 62.50% 75.00%,#ecc484 75.00% 87.50%,#b4b4b4 87.50% 100.00%);outline:1px solid #a8a8a8;"></div>
<div class="a" style="left:624.1px;top:490.2px;width:284.0px;height:13.6px;background:linear-gradient(90deg,#50dcb4 0.00% 12.50%,#fc8c3c 12.50% 25.00%,#a09ccc 25.00% 37.50%,#f060a8 37.50% 50.00%,#98dc54 50.00% 62.50%,#fcd048 62.50% 75.00%,#e0b054 75.00% 87.50%,#989898 87.50% 100.00%);outline:1px solid #a8a8a8;"></div>
<div class="a" style="left:624.1px;top:508.4px;width:284.0px;height:13.6px;background:linear-gradient(90deg,#147458 0.00% 12.50%,#a04400 12.50% 25.00%,#44408c 25.00% 37.50%,#a81058 37.50% 50.00%,#447814 50.00% 62.50%,#a07800 62.50% 75.00%,#785414 75.00% 87.50%,#484848 87.50% 100.00%);outline:1px solid #a8a8a8;"></div>
<div class="a" style="left:624.1px;top:526.5px;width:284.0px;height:13.6px;background:linear-gradient(90deg,#0c4c3c 0.00% 12.50%,#6c2c00 12.50% 25.00%,#2c2c5c 25.00% 37.50%,#700c3c 37.50% 50.00%,#2c500c 50.00% 62.50%,#6c5000 62.50% 75.00%,#503810 75.00% 87.50%,#303030 87.50% 100.00%);outline:1px solid #a8a8a8;"></div>
<span class="t" style="left:623.5px;top:549.3px;font-size:12.6px;color:#000;font-family:'Liberation Sans',sans-serif;transform:scaleX(0.885);">Palettes</span>
<div class="a" style="left:624px;top:566.2px;width:32.6px;height:14.4px;background:linear-gradient(90deg,#0f5c90,#2a9aa2 45%,#c8b8a0 75%,#dab89c);border:1px solid #9c9c9c;"></div>
<div class="a" style="left:660.2px;top:566.2px;width:32.6px;height:14.4px;background:linear-gradient(90deg,#15305f,#1f5288 40%,#4a4820 62%,#e8dcc8 85%,#fff);border:1px solid #9c9c9c;"></div>
<div class="a" style="left:696.3px;top:566.2px;width:32.6px;height:14.4px;background:linear-gradient(90deg,#00002c,#000070 40%,#0000d8);border:1px solid #9c9c9c;"></div>
<div class="a" style="left:732.4px;top:566.2px;width:32.6px;height:14.4px;background:linear-gradient(90deg,#3f5fd0,#20c020 50%,#e6f520);border:1px solid #9c9c9c;"></div>
<div class="a" style="left:768.5px;top:566.2px;width:32.6px;height:14.4px;background:linear-gradient(90deg,#1c1cd8,#80808c 50%,#f5f518);border:1px solid #9c9c9c;"></div>
<div class="a" style="left:804.5px;top:566.2px;width:32.6px;height:14.4px;background:linear-gradient(90deg,#a00000,#ff1000 35%,#ffc000 62%,#ffff40 85%,#ffffa0);border:1px solid #9c9c9c;"></div>
<div class="a" style="left:840.5px;top:566.2px;width:32.6px;height:14.4px;background:linear-gradient(90deg,#c8dc50,#8c7460 55%,#4a2c54);border:1px solid #9c9c9c;"></div>
<div class="a" style="left:876.6px;top:566.2px;width:32.6px;height:14.4px;background:linear-gradient(90deg,#101010,#808080 50%,#ffffff);border:1px solid #9c9c9c;"></div>
<div class="a" style="left:624px;top:584.1px;width:32.6px;height:14.4px;background:linear-gradient(90deg,#002800,#00a010 55%,#00f020);border:1px solid #9c9c9c;"></div>
<div class="a" style="left:660.2px;top:584.1px;width:32.6px;height:14.4px;background:linear-gradient(90deg,#a85818,#000000 45%,#0c4c8c 80%,#1464a8);border:1px solid #9c9c9c;"></div>
<div class="a" style="left:696.3px;top:584.1px;width:32.6px;height:14.4px;background:linear-gradient(90deg,#b00000,#000000 48%,#00c418);border:1px solid #9c9c9c;"></div>
<div class="a" style="left:732.4px;top:584.1px;width:32.6px;height:14.4px;background:linear-gradient(90deg,#0000a0,#2020f0 45%,#a0a0f8 75%,#ffffff);border:1px solid #9c9c9c;"></div>
<div class="a" style="left:768.5px;top:584.1px;width:32.6px;height:14.4px;background:linear-gradient(90deg,#2c90d4,#7cc8ec 50%,#d8f2fc);border:1px solid #9c9c9c;"></div>
<div class="a" style="left:804.5px;top:584.1px;width:32.6px;height:14.4px;background:linear-gradient(90deg,#007800,#18e018 45%,#c8f4c8);border:1px solid #9c9c9c;"></div>
<div class="a" style="left:840.5px;top:584.1px;width:32.6px;height:14.4px;background:linear-gradient(90deg,#a4d480,#d0ecc0 55%,#f0fae8);border:1px solid #9c9c9c;"></div>
<div class="a" style="left:876.6px;top:584.1px;width:32.6px;height:14.4px;background:linear-gradient(90deg,#2c7cc0,#88c0e0 55%,#e0f4f8);border:1px solid #9c9c9c;"></div>
<div class="a" style="left:624px;top:602.2px;width:32.6px;height:14.4px;background:linear-gradient(90deg,#d8a080,#f0c8b4 50%,#fcf0ea);border:1px solid #9c9c9c;"></div>
<div class="a" style="left:660.2px;top:602.2px;width:32.6px;height:14.4px;background:linear-gradient(90deg,#68bcc8,#a8dce0 50%,#eefafa);border:1px solid #9c9c9c;"></div>
<div class="a" style="left:696.3px;top:602.2px;width:32.6px;height:14.4px;background:linear-gradient(90deg,#9c9ccc,#c8c4e4 50%,#f6f0fa);border:1px solid #9c9c9c;"></div>
<div class="a" style="left:732.4px;top:602.2px;width:32.6px;height:14.4px;background:linear-gradient(90deg,#f05858,#f4a0a0 50%,#fce8e8);border:1px solid #9c9c9c;"></div>
<div class="a" style="left:768.5px;top:602.2px;width:32.6px;height:14.4px;background:linear-gradient(90deg,#f03ca0,#f890c4 55%,#fcd4e4);border:1px solid #9c9c9c;"></div>
<div class="a" style="left:804.5px;top:602.2px;width:32.6px;height:14.4px;background:linear-gradient(90deg,#f0a060,#f4c498 50%,#fce8d0);border:1px solid #9c9c9c;"></div>
<div class="a" style="left:840.5px;top:602.2px;width:32.6px;height:14.4px;background:linear-gradient(90deg,#f0a0b8,#f4c8d4 50%,#fcecf0);border:1px solid #9c9c9c;"></div>
<div class="a" style="left:876.6px;top:602.2px;width:32.6px;height:14.4px;background:linear-gradient(90deg,#a888c4,#d0b4dc 50%,#f4e8f4);border:1px solid #9c9c9c;"></div>
<div class="a" style="left:624px;top:620.2px;width:32.6px;height:14.4px;background:linear-gradient(90deg,#5858ac,#a8a8d8 50%,#e8e8f6);border:1px solid #9c9c9c;"></div>
<div class="a" style="left:660.2px;top:620.2px;width:32.6px;height:14.4px;background:linear-gradient(90deg,#980000,#f01818 45%,#f89090 75%,#fcd4d4);border:1px solid #9c9c9c;"></div>
<div class="a" style="left:696.3px;top:620.2px;width:32.6px;height:14.4px;background:linear-gradient(90deg,#fff018,#fff880 50%,#fffce8);border:1px solid #9c9c9c;"></div>
<div class="a" style="left:732.4px;top:620.2px;width:32.6px;height:14.4px;background:linear-gradient(90deg,#78a030,#e8a828 50%,#f42828);border:1px solid #9c9c9c;"></div>
<div class="a" style="left:768.5px;top:620.2px;width:32.6px;height:14.4px;background:linear-gradient(90deg,#6c5030,#a07040 45%,#c88c50 75%,#a87848);border:1px solid #9c9c9c;"></div>
<div class="a" style="left:804.5px;top:620.2px;width:32.6px;height:14.4px;background:linear-gradient(90deg,#f4b0c4,#f4f0b0 40%,#a8dcc8 65%,#90cce8 85%,#b0d8f0);border:1px solid #9c9c9c;"></div>
<div class="a" style="left:840.5px;top:620.2px;width:32.6px;height:14.4px;background:linear-gradient(90deg,#f05800,#f0e060 45%,#58a030 75%,#107818);border:1px solid #9c9c9c;"></div>
<div class="a" style="left:876.6px;top:620.2px;width:32.6px;height:14.4px;background:linear-gradient(90deg,#7000f0,#1050f0 22%,#00c8c0 42%,#20e020 58%,#f0f000 74%,#f01010);border:1px solid #9c9c9c;"></div>
<div class="a" style="left:624px;top:638.1px;width:32.6px;height:14.4px;background:linear-gradient(90deg,#8840e8,#2080c8 30%,#209820 62%,#c83010);border:1px solid #9c9c9c;"></div>
<div class="a" style="left:660.2px;top:638.1px;width:32.6px;height:14.4px;background:linear-gradient(90deg,#6000c0,#1040f0 18%,#00d0d0 32%,#20e020 45%,#f0f000 58%,#f01010 75%,#900000);border:1px solid #9c9c9c;"></div>
<div class="a" style="left:696.3px;top:638.1px;width:32.6px;height:14.4px;background:linear-gradient(90deg,#180000,#900000 50%,#f80000);border:1px solid #9c9c9c;"></div>
<div class="a" style="left:732.4px;top:638.1px;width:32.6px;height:14.4px;background:linear-gradient(90deg,#2038f0,#ffffff 46%,#f01818 47%,#f8a0a0 75%,#ffffff);border:1px solid #9c9c9c;"></div>
<div class="a" style="left:768.5px;top:638.1px;width:32.6px;height:14.4px;background:linear-gradient(90deg,#f08000 0 10%,#f8e020 10% 28%,#f09030 28% 36%,#106890 36% 50%,#1890c0 50% 56%,#105c9c 56% 64%,#8060c0 64% 74%,#e8b8e0 74% 88%,#d0d0f0 88%);border:1px solid #9c9c9c;"></div>
<div class="a" style="left:804.5px;top:638.1px;width:32.6px;height:14.4px;background:linear-gradient(90deg,#6c8478,#a8b498 50%,#ecf0c8);border:1px solid #9c9c9c;"></div>
<div class="a" style="left:840.5px;top:638.1px;width:32.6px;height:14.4px;background:linear-gradient(90deg,#f48c8c,#ffffff 50%,#8c8cf4);border:1px solid #9c9c9c;"></div>
<div class="a" style="left:876.6px;top:638.1px;width:32.6px;height:14.4px;background:linear-gradient(90deg,#e00808,#ff7010 40%,#f8c080 75%,#f8e8c0);border:1px solid #9c9c9c;"></div>
<div class="a" style="left:624px;top:656.1px;width:32.6px;height:14.4px;background:linear-gradient(90deg,#000090,#1030f0 22%,#10b020 42%,#f8f800 62%,#f87000 80%,#e00000);border:1px solid #9c9c9c;"></div>
<div class="a" style="left:660.2px;top:656.1px;width:32.6px;height:14.4px;background:linear-gradient(90deg,#2030e8,#ffffff 42%,#f8f020 65%,#f03010);border:1px solid #9c9c9c;"></div>
<div class="a" style="left:696.3px;top:656.1px;width:32.6px;height:14.4px;background:linear-gradient(90deg,#2030f0,#ffffff 50%,#f02020);border:1px solid #9c9c9c;"></div>
<div class="a" style="left:732.4px;top:656.1px;width:32.6px;height:14.4px;background:linear-gradient(90deg,#1c90f0,#c8f4fc 34%,#90b488 36%,#c4cc98 62%,#84542c);border:1px solid #9c9c9c;"></div>
<div class="a" style="left:768.5px;top:656.1px;width:32.6px;height:14.4px;background:linear-gradient(90deg,#98b088,#e8e8b8 50%,#8c5838);border:1px solid #9c9c9c;"></div>
<div class="a" style="left:804.5px;top:656.1px;width:32.6px;height:14.4px;background:linear-gradient(90deg,#7c1c3c,#e08ca0 50%,#fcecec);border:1px solid #9c9c9c;"></div>
<div class="a" style="left:840.5px;top:656.1px;width:32.6px;height:14.4px;background:linear-gradient(90deg,#28c028,#e8f4d8 50%,#f42828);border:1px solid #9c9c9c;"></div>
<div class="a" style="left:876.6px;top:656.1px;width:32.6px;height:14.4px;background:linear-gradient(90deg,#9000d0,#1030f0 22%,#10c8c0 40%,#30e030 55%,#f8f000 72%,#f01010);border:1px solid #9c9c9c;"></div>
<div class="a" style="left:562px;top:47px;width:61.5px;height:38.5px;border:3px solid #dc3c46;"></div>
<div class="a" style="left:524.5px;top:321.5px;width:226px;height:55px;border:3px solid #dc3c46;"></div>
<div class="a" style="left:616px;top:397.3px;width:158.8px;height:32.4px;border:3px solid #dc3c46;"></div>
<svg class="a" style="left:0;top:0" width="988" height="683" viewBox="0 0 988 683"><path d="M395 392.4L411.6 386.4L411.3 390.6L624.5 421.3L410.3 399L409.5 401.8Z" fill="#800080"/></svg>
<div class="a" style="left:0px;top:650px;width:617px;height:28px;background:linear-gradient(#f3f4fa 0%,#e6e7f2 35%,#cfd0e3 75%,#b9bad3 100%);"></div>
<div class="a" style="left:0px;top:678px;width:988px;height:5px;background:#eceef6;"></div>
<div class="a" style="left:0px;top:677.5px;width:617px;height:1px;background:#a9aac2;"></div>
<svg class="a" style="left:7.8px;top:657.5px;" width="11" height="15" viewBox="0 0 11 15"><g stroke="#e01818" stroke-width="1.3" fill="none"><path d="M2.5 1h5.5M5.3 1v3M5.3 10v3M2.5 13.4h5.5"/><rect x=".8" y="4" width="9" height="6"/><path d="M.8 7h9"/></g></svg>
<svg class="a" style="left:25px;top:663px;" width="7" height="4" viewBox="0 0 7 4"><path d="M0 0h6.4L3.2 3.6z" fill="#111"/></svg>
<svg class="a" style="left:35.5px;top:661px;" width="17" height="12" viewBox="0 0 17 12"><path d="M0 1l5 5 4-4 3 2 4.5-3v11H0z" fill="#0c0c0c"/><path d="M.5 2.5l4.5 4 3 4.5H.5z" fill="#e01818"/><path d="M6 5.5c1-3 4-3 5.5 0l-2.5 2.500z" fill="#30d030"/></svg>
<svg class="a" style="left:56px;top:663px;" width="7" height="4" viewBox="0 0 7 4"><path d="M0 0h6.4L3.2 3.6z" fill="#111"/></svg>
<svg class="a" style="left:67.5px;top:657.5px;" width="15" height="15" viewBox="0 0 15 15"><g stroke="#1c1cc8" stroke-width="1.1" fill="#1c1cc8"><path d="M1.5 1.500l10 9.500M12.500 1.500l-3 3M2 12l2-2M11.500 14v-4"/><path d="M0 0l3.600 .8-2.800 2.800zM13.500 0l-.8 3.600-2.800-2.800zM.5 13.500l.8-3.600 2.800 2.800zM11.500 7.500l1.800 3h-3.600z" stroke="none"/></g></svg>
<svg class="a" style="left:87px;top:663px;" width="7" height="4" viewBox="0 0 7 4"><path d="M0 0h6.4L3.2 3.6z" fill="#111"/></svg>
<svg class="a" style="left:99px;top:655px;" width="16" height="19" viewBox="0 0 16 19"><path d="M4 1v16" stroke="#111" stroke-width="1.2"/><rect x="1.5" y="5" width="5" height="8" fill="#fff" stroke="#111" stroke-width="1.2"/><path d="M11.5 2v16" stroke="#e01818" stroke-width="1.2"/><rect x="9" y="6" width="5" height="8" fill="#e01818"/></svg>
<svg class="a" style="left:118px;top:663px;" width="7" height="4" viewBox="0 0 7 4"><path d="M0 0h6.4L3.2 3.6z" fill="#111"/></svg>
<svg class="a" style="left:130px;top:657px;" width="17" height="16" viewBox="0 0 17 16"><g stroke="#7e7e92" fill="#b8b8c8"><rect x="1" y="1" width="11" height="10"/><rect x="4" y="4" width="11" height="10" fill="#cfcfdc"/><rect x="6" y="6" width="7" height="6" fill="#a8a8ba"/></g></svg>
<div class="a" style="left:151.4px;top:651px;width:10.4px;height:27px;background:linear-gradient(#b6b7d0 0%,#c6c7dc 40%,#e6e6f0 80%,#f2f2f8 100%);border-radius:0 5px 0 0;"></div>
<div class="a" style="left:161.8px;top:651px;width:1.6px;height:27px;background:#f6f6fb;"></div>
<svg class="a" style="left:154px;top:668px;" width="7" height="8" viewBox="0 0 7 8"><path d="M0 .9h5.4" stroke="#111" stroke-width="1.3"/><path d="M0 3h5.400L2.700 6.200z" fill="#111"/></svg>
<div class="a" style="left:166px;top:655px;width:2px;height:17px;background:repeating-linear-gradient(#b2b3cc 0 2px,transparent 2px 4px);"></div>
<svg class="a" style="left:173px;top:656px;" width="18" height="18" viewBox="0 0 18 18"><g stroke="#7e7e92" stroke-width="1" fill="#d8d8e4"><path d="M1 7l5-5.5h10V11l-5 5.5H1z"/><path d="M6 1.5V11l-5 5.5M6 11h10" fill="none"/><path d="M6 16V6l4-4v10z" fill="#a8a8ba"/></g></svg>
<svg class="a" style="left:194px;top:663px;" width="7" height="4" viewBox="0 0 7 4"><path d="M0 0h6.4L3.2 3.6z" fill="#111"/></svg>
<div class="a" style="left:207px;top:656px;width:1px;height:17px;background:#c2c3d8;"></div>
<svg class="a" style="left:213px;top:656px;" width="17" height="18" viewBox="0 0 17 18"><g stroke="#7e7e92" stroke-width="1" fill="#c6c6d4"><path d="M1 6l5-4.5h10V12l-5 4.5H1z"/><path d="M1 6h10v10.5M11 6l5-4.5" fill="none"/></g><path d="M3 8v7M5.5 8v7M8 8v7" stroke="#8a8a9e"/></svg>
<svg class="a" style="left:232px;top:663px;" width="7" height="4" viewBox="0 0 7 4"><path d="M0 0h6.4L3.2 3.6z" fill="#111"/></svg>
<svg class="a" style="left:244px;top:656px;" width="17" height="18" viewBox="0 0 17 18"><g stroke="#7e7e92" stroke-width="1" fill="#d4d4e0"><path d="M1 6l5-4.5h10V12l-5 4.5H1z"/><path d="M1 6h10v10.5M11 6l5-4.5" fill="none"/></g><g fill="#7e7e92"><circle cx="4" cy="9" r="1"/><circle cx="8" cy="13" r="1"/><circle cx="13.5" cy="6" r="1"/><circle cx="9" cy="4" r=".9"/></g></svg>
<svg class="a" style="left:263px;top:663px;" width="7" height="4" viewBox="0 0 7 4"><path d="M0 0h6.4L3.2 3.6z" fill="#111"/></svg>
<svg class="a" style="left:275px;top:656px;" width="17" height="18" viewBox="0 0 17 18"><rect x="1" y="2" width="14.5" height="14" fill="#a6a6b8"/><g fill="#d8d8e4"><rect x="3" y="4" width="2" height="2"/><rect x="7" y="4" width="2" height="2"/><rect x="11" y="4" width="2" height="2"/><rect x="3" y="8" width="2" height="2"/><rect x="7" y="8" width="2" height="2"/><rect x="11" y="8" width="2" height="2"/><rect x="3" y="12" width="2" height="2"/><rect x="7" y="12" width="2" height="2"/><rect x="11" y="12" width="2" height="2"/></g></svg>
<svg class="a" style="left:294px;top:663px;" width="7" height="4" viewBox="0 0 7 4"><path d="M0 0h6.4L3.2 3.6z" fill="#111"/></svg>
<svg class="a" style="left:305px;top:655px;" width="18" height="19" viewBox="0 0 18 19"><path d="M1 6l3-3 3 3 3-4 3 4 3-3v5H1z" fill="none" stroke="#7e7e92" stroke-width="1.2"/><rect x="1" y="8" width="15.5" height="9" fill="#a6a6b8"/><g fill="#e4e4ee"><rect x="3" y="10" width="3" height="2"/><rect x="7.5" y="10" width="3" height="2"/><rect x="12" y="10" width="3" height="2"/><rect x="3" y="13.5" width="3" height="2"/><rect x="7.5" y="13.5" width="3" height="2"/><rect x="12" y="13.5" width="3" height="2"/></g></svg>
<svg class="a" style="left:326px;top:663px;" width="7" height="4" viewBox="0 0 7 4"><path d="M0 0h6.4L3.2 3.6z" fill="#111"/></svg>
<svg class="a" style="left:337px;top:656px;" width="18" height="18" viewBox="0 0 18 18"><rect x="1" y="1" width="15.5" height="15.5" fill="#b4b4c4" stroke="#8a8a9e"/><rect x="3" y="3" width="11.5" height="11.5" fill="#a6a6b8"/></svg>
<div class="a" style="left:358.4px;top:651px;width:10.4px;height:27px;background:linear-gradient(#b6b7d0 0%,#c6c7dc 40%,#e6e6f0 80%,#f2f2f8 100%);border-radius:0 5px 0 0;"></div>
<div class="a" style="left:368.8px;top:651px;width:1.6px;height:27px;background:#f6f6fb;"></div>
<svg class="a" style="left:361px;top:668px;" width="7" height="8" viewBox="0 0 7 8"><path d="M0 .9h5.4" stroke="#111" stroke-width="1.3"/><path d="M0 3h5.400L2.700 6.200z" fill="#111"/></svg>
<div class="a" style="left:374px;top:655px;width:2px;height:17px;background:repeating-linear-gradient(#b2b3cc 0 2px,transparent 2px 4px);"></div>
<svg class="a" style="left:383px;top:655px;" width="17" height="19" viewBox="0 0 17 19"><path d="M2 3l3 2h6l3-2v9l-3 3H5l-3-3z" fill="#c4c4d2" stroke="#7e7e92"/><circle cx="5.8" cy="8" r="1" fill="#7e7e92"/><circle cx="10.2" cy="8" r="1" fill="#7e7e92"/><path d="M5.5 11c1.5 1.5 3.5 1.5 5 0" fill="none" stroke="#7e7e92"/><path d="M1 16.5h14" stroke="#b0b0c0" stroke-width="2" stroke-dasharray="3 2"/></svg>
<svg class="a" style="left:405px;top:655px;" width="17" height="19" viewBox="0 0 17 19"><path d="M2 3l3 2h6l3-2v9l-3 3H5l-3-3z" fill="#c4c4d2" stroke="#7e7e92"/><circle cx="5.8" cy="8" r="1" fill="#7e7e92"/><circle cx="10.2" cy="8" r="1" fill="#7e7e92"/><path d="M5.5 11c1.5 1.5 3.5 1.5 5 0" fill="none" stroke="#7e7e92"/><path d="M1 16.5h14" stroke="#b0b0c0" stroke-width="2" stroke-dasharray="3 2"/><path d="M3 4l10 10M13 4L3 14" stroke="#8a8a9e" stroke-width="1.2"/></svg>
<div class="a" style="left:428px;top:656px;width:1px;height:17px;background:#c2c3d8;"></div>
<svg class="a" style="left:435px;top:656px;" width="16" height="17" viewBox="0 0 16 17"><path d="M1 2c4 1 9 1 13-1 1 6 0 11-5 14C3 13 1 8 1 2z" fill="#c4c4d2" stroke="#6e6e82" stroke-width="1.1"/><path d="M8 1.5v13" stroke="#6e6e82"/><path d="M8 2c2 0 4-.4 6-1 .8 6-.6 10.6-5 13.6z" fill="#8a8a9e"/><circle cx="5" cy="6" r="1" fill="#555"/><path d="M4 10c1 1 2.5 1.2 3.5.6" stroke="#555" fill="none"/></svg>
<svg class="a" style="left:457px;top:655px;" width="18" height="19" viewBox="0 0 18 19"><rect x="0.5" y="4.0" width="2.7" height="2.5" fill="#8a8a9e"/><rect x="4.2" y="4.0" width="2.7" height="2.5" fill="#8a8a9e"/><rect x="7.9" y="4.0" width="2.7" height="2.5" fill="#8a8a9e"/><rect x="0.5" y="7.6" width="2.7" height="2.5" fill="#8a8a9e"/><rect x="4.2" y="7.6" width="2.7" height="2.5" fill="#8a8a9e"/><rect x="7.9" y="7.6" width="2.7" height="2.5" fill="#8a8a9e"/><rect x="0.5" y="11.2" width="2.7" height="2.5" fill="#8a8a9e"/><rect x="4.2" y="11.2" width="2.7" height="2.5" fill="#8a8a9e"/><rect x="7.9" y="11.2" width="2.7" height="2.5" fill="#8a8a9e"/><path d="M14.5 2v15" stroke="#7e7e92" stroke-width="1.3"/><path d="M14.5 0l2.6 4h-5.2zM14.5 19l2.6-4h-5.2z" fill="#7e7e92"/></svg>
<svg class="a" style="left:479px;top:655px;" width="18" height="19" viewBox="0 0 18 19"><rect x="0.5" y="4.0" width="2.7" height="2.5" fill="#111"/><rect x="4.2" y="4.0" width="2.7" height="2.5" fill="#111"/><rect x="7.9" y="4.0" width="2.7" height="2.5" fill="#111"/><rect x="0.5" y="7.6" width="2.7" height="2.5" fill="#e01818"/><rect x="4.2" y="7.6" width="2.7" height="2.5" fill="#e01818"/><rect x="7.9" y="7.6" width="2.7" height="2.5" fill="#e01818"/><rect x="0.5" y="11.2" width="2.7" height="2.5" fill="#111"/><rect x="4.2" y="11.2" width="2.7" height="2.5" fill="#111"/><rect x="7.9" y="11.2" width="2.7" height="2.5" fill="#111"/><path d="M14.5 2v15" stroke="#111" stroke-width="1.3"/><path d="M14.5 0l2.6 4h-5.2zM14.5 19l2.6-4h-5.2z" fill="#111"/></svg>
<div class="a" style="left:501px;top:656px;width:1px;height:17px;background:#c2c3d8;"></div>
<svg class="a" style="left:509px;top:655px;" width="18" height="19" viewBox="0 0 18 19"><rect x="0.5" y="4.0" width="2.7" height="2.5" fill="#111"/><rect x="4.2" y="4.0" width="2.7" height="2.5" fill="#111"/><rect x="7.9" y="4.0" width="2.7" height="2.5" fill="#111"/><rect x="0.5" y="7.6" width="2.7" height="2.5" fill="#e01818"/><rect x="4.2" y="7.6" width="2.7" height="2.5" fill="#e01818"/><rect x="7.9" y="7.6" width="2.7" height="2.5" fill="#e01818"/><rect x="0.5" y="11.2" width="2.7" height="2.5" fill="#111"/><rect x="4.2" y="11.2" width="2.7" height="2.5" fill="#111"/><rect x="7.9" y="11.2" width="2.7" height="2.5" fill="#111"/><path d="M14.5 2v15" stroke="#111" stroke-width="1.3"/><path d="M14.5 0l2.6 4h-5.2zM14.5 19l2.6-4h-5.2z" fill="#111"/></svg>
<div class="a" style="left:529.4px;top:651px;width:10.4px;height:27px;background:linear-gradient(#b6b7d0 0%,#c6c7dc 40%,#e6e6f0 80%,#f2f2f8 100%);border-radius:0 5px 0 0;"></div>
<div class="a" style="left:539.8px;top:651px;width:1.6px;height:27px;background:#f6f6fb;"></div>
<svg class="a" style="left:532px;top:668px;" width="7" height="8" viewBox="0 0 7 8"><path d="M0 .9h5.4" stroke="#111" stroke-width="1.3"/><path d="M0 3h5.400L2.700 6.200z" fill="#111"/></svg>
<div class="a" style="left:545.5px;top:655px;width:2px;height:17px;background:repeating-linear-gradient(#b2b3cc 0 2px,transparent 2px 4px);"></div>
<svg class="a" style="left:555px;top:656px;" width="17" height="18" viewBox="0 0 17 18"><g opacity=".8"><rect x="5" y="2" width="7" height="14" fill="#9a9aae" stroke="#7e7e92" transform="rotate(0 8.5 9)"/><path d="M1 8c0 5 4 6 6 5" fill="none" stroke="#9a9aae" stroke-width="1.6"/><path d="M13 5c3 1 3 5 0 7" fill="none" stroke="#9a9aae" stroke-width="1.6"/></g></svg>
<svg class="a" style="left:575px;top:656px;" width="17" height="18" viewBox="0 0 17 18"><g opacity=".8"><rect x="5" y="2" width="7" height="14" fill="#9a9aae" stroke="#7e7e92" transform="rotate(0 8.5 9)"/><path d="M1 8c0 5 4 6 6 5" fill="none" stroke="#9a9aae" stroke-width="1.6"/><path d="M13 5c3 1 3 5 0 7" fill="none" stroke="#9a9aae" stroke-width="1.6"/></g></svg>
<svg class="a" style="left:596px;top:655px;" width="19" height="19" viewBox="0 0 19 19"><g opacity=".85"><rect x="3" y="3" width="7" height="14" fill="#9a9aae" stroke="#7e7e92" transform="rotate(-18 6.5 10)"/><path d="M10 5h8M10 5l3.5-3M10 5l3.5 3" stroke="#9a9aae" stroke-width="1.8" fill="none"/></g></svg>
<div class="a" style="left:919px;top:609px;width:69px;height:69px;background:#fff;"></div>
<div class="a" style="left:919px;top:609px;width:12px;height:69px;background:linear-gradient(90deg,#a9abc8 0%,#c9cadf 60%,#e6e7f1 100%);border-radius:0 0 5px 0;"></div>
<div class="a" style="left:919.5px;top:608px;width:5.5px;height:4.5px;background:#fff;border:1px solid #444;"></div>
<div class="a" style="left:919.5px;top:630.5px;width:4px;height:4.5px;background:#fff;border:1px solid #444;"></div>
<div class="a" style="left:925.5px;top:631.5px;width:1px;height:1.5px;background:#444;"></div>
<div class="a" style="left:925.5px;top:634px;width:1px;height:1.5px;background:#444;"></div>
<div class="a" style="left:919.5px;top:638.5px;width:5px;height:5px;background:#fff;border:1px solid #444;"></div>
<div class="a" style="left:925.8px;top:639.5px;width:1px;height:1.5px;background:#444;"></div>
<div class="a" style="left:925.8px;top:642px;width:1px;height:1.5px;background:#444;"></div>
<svg class="a" style="left:921px;top:670.5px;" width="8" height="6" viewBox="0 0 8 6"><rect x="0" y="0" width="1.6" height="5.6" fill="#111"/><path d="M3 0l4 2.8-4 2.8z" fill="#111"/></svg>
<div class="a" style="left:937px;top:609px;width:60px;height:46.5px;background:#f3f3f3;border:1px solid #8a8a8a;"></div>
<div class="a" style="left:961px;top:609px;width:40px;height:43.5px;background:#fff;border:1px solid #6a6a6a;"></div>
<div class="a" style="left:931px;top:676px;width:57px;height:1px;background:#dcdce6;"></div>
<span class="t" style="left:944.9px;top:659.8px;font-size:12.8px;color:#6e6e6e;font-family:'Liberation Sans',sans-serif;transform:scaleX(0.957);">Object M</span>
<div class="a" style="left:985.6px;top:0px;width:1.4px;height:683px;background:#fdfdfd;"></div>
<div class="a" style="left:987px;top:0px;width:1px;height:683px;background:#141414;"></div>
</body></html>
